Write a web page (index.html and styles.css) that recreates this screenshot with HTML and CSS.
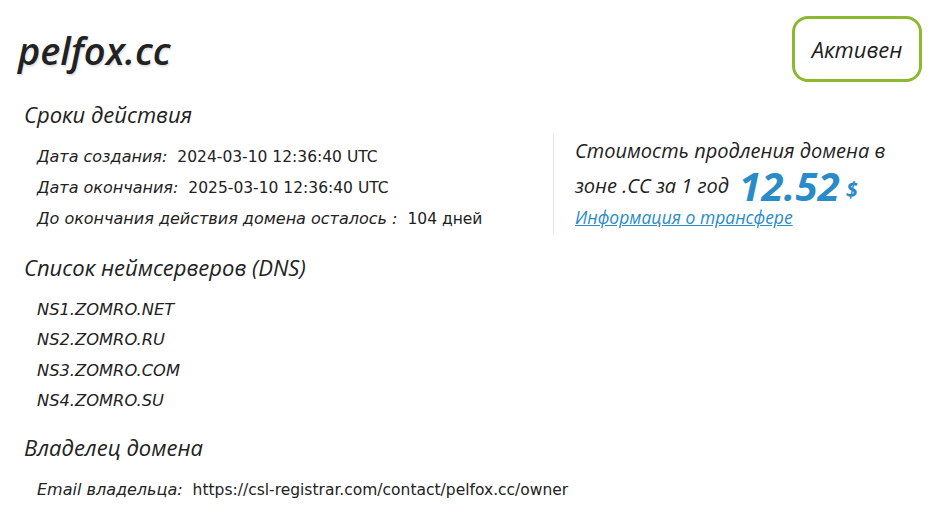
FILE: index.html
```html
<!DOCTYPE html>
<html lang="ru">
<head>
<meta charset="utf-8">
<link rel="stylesheet" href="styles.css">
</head>
<body>
<div class="page">
  <div class="header">
    <h1 class="domain">pelfox.cc</h1>
    <div class="status">Активен</div>
  </div>
  <div class="main">
    <div class="left">
      <h2 class="section">Сроки действия</h2>
      <div class="rows">
        <div class="row"><span class="label">Дата создания:</span><span class="value">2024-03-10 12:36:40 UTC</span></div>
        <div class="row"><span class="label">Дата окончания:</span><span class="value">2025-03-10 12:36:40 UTC</span></div>
        <div class="row"><span class="label">До окончания действия домена осталось :</span><span class="value">104 дней</span></div>
      </div>
    </div>
    <div class="right">
      <div class="price-line">Стоимость продления домена в</div>
      <div class="price-line second">зоне .CC за 1 год <span class="price">12.52</span><span class="cur">$</span></div>
      <a class="link" href="#">Информация о трансфере</a>
    </div>
  </div>
  <h2 class="section sec-dns">Список неймсерверов (DNS)</h2>
  <div class="ns">
    <div class="ns-item">NS1.ZOMRO.NET</div>
    <div class="ns-item">NS2.ZOMRO.RU</div>
    <div class="ns-item">NS3.ZOMRO.COM</div>
    <div class="ns-item">NS4.ZOMRO.SU</div>
  </div>
  <h2 class="section sec-owner">Владелец домена</h2>
  <div class="rows">
    <div class="row"><span class="label">Email владельца:</span><span class="value">https://csl-registrar.com/contact/pelfox.cc/owner</span></div>
  </div>
</div>
</body>
</html>
```

FILE: styles.css
```css
* { box-sizing: border-box; }
html, body { margin: 0; padding: 0; background: #fff; }
body { font-family: "Open Sans", "DejaVu Sans", sans-serif; color: #222; }
.page { padding: 16px 24px 0 18px; }
.header { display: flex; justify-content: space-between; align-items: flex-start; }
.domain {
  margin: 12px 0 0 0;
  font-size: 38px;
  font-weight: 600;
  font-style: italic;
  line-height: 44px;
  color: #222;
  text-shadow: 1px 2px 2px rgba(0,0,0,0.12);
}
.status {
  width: 130px;
  height: 66px;
  border: 3px solid #8cb92f;
  border-radius: 16px;
  display: flex;
  align-items: center;
  justify-content: center;
  font-style: italic;
  font-size: 22px;
  color: #1e1e1e;
}
.section {
  margin: 0 0 0 6px;
  font-size: 22px;
  font-weight: 400;
  font-style: italic;
  line-height: 30px;
}
.main { display: flex; margin-top: 17px; }
.left { width: 535px; }
.rows { padding: 12px 0 0 19px; }
.row { height: 31px; display: flex; align-items: center; font-family: "DejaVu Sans", sans-serif; font-size: 16px; }
.label { font-style: italic; margin-right: 10px; }
.value { font-size: 15.5px; }
.right {
  margin-top: 35px;
  border-left: 1px solid #e4e4e4;
  padding: 0 0 0 21px;
  height: 100px;
}
.price-line { font-style: italic; font-size: 20px; height: 33px; display: flex; align-items: center; white-space: nowrap; }
.price-line.second { margin-top: 2px; }
.price { color: #2a8bc7; font-size: 40px; font-weight: 700; line-height: 30px; margin-left: 10px; letter-spacing: 0.3px; }
.cur { color: #2a8bc7; font-size: 21px; font-weight: 700; margin-left: 6px; margin-top: 6px; }
.link { display: block; color: #2a8bc7; font-style: italic; font-size: 17.5px; line-height: 24px; margin-top: 3px; }
.sec-dns { margin-top: 18px; }
.sec-owner { margin-top: 12px; }
.ns { padding: 12px 0 4px 19px; }
.ns-item { height: 30.5px; display: flex; align-items: center; font-family: "DejaVu Sans", sans-serif; font-style: italic; font-size: 16.3px; }
```
